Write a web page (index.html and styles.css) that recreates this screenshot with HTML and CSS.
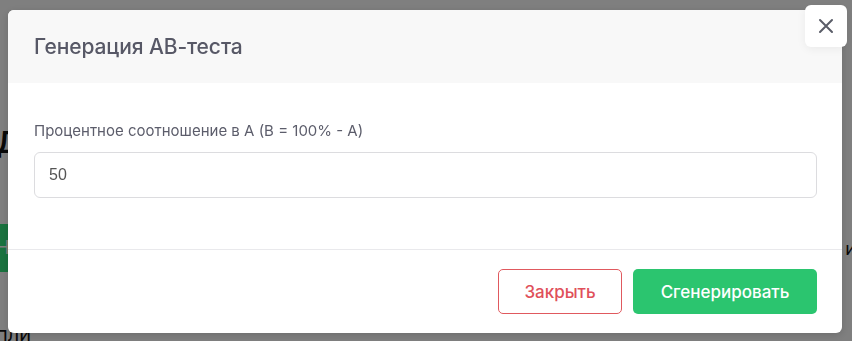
FILE: index.html
```html
<!DOCTYPE html>
<html lang="ru">
<head>
  <meta charset="UTF-8">
  <meta name="viewport" content="width=device-width, initial-scale=1.0">
  <title>Генерация АВ-теста</title>
  <link rel="stylesheet" href="styles.css">
</head>
<body>
  <!-- Страница под модалкой -->
  <div class="page">
    <div class="page-title">Д</div>
    <div class="page-btn">Не</div>
    <div class="page-foot">пли</div>
    <div class="page-side">и</div>
  </div>

  <!-- Модалка -->
  <div class="backdrop">
    <div class="modal">
      <button class="close-x" aria-label="Закрыть">
        <svg width="16" height="16" viewBox="0 0 16 16">
          <path d="M2 2 L14 14 M14 2 L2 14" stroke="#5a5d68" stroke-width="2" stroke-linecap="round" fill="none"/>
        </svg>
      </button>
      <div class="modal-header">
        <h3>Генерация АВ-теста</h3>
      </div>
      <div class="modal-body">
        <label for="percent">Процентное соотношение в А (В = 100% - А)</label>
        <input id="percent" type="text" value="50">
      </div>
      <div class="modal-footer">
        <button class="btn-close">Закрыть</button>
        <button class="btn-generate">Сгенерировать</button>
      </div>
    </div>
  </div>
</body>
</html>
```

FILE: styles.css
```css
/* Базовые стили */
body {
  margin: 0;
  padding: 0;
  font-family: Inter, "Noto Sans", sans-serif;
  background: #fff;
  height: 341px;
  overflow: hidden;
}

.page {
  position: relative;
  height: 341px;
}

.page-title {
  position: absolute;
  left: -4px;
  top: 124px;
  font-size: 30px;
  font-weight: 600;
  color: #111;
}

.page-btn {
  position: absolute;
  left: -20px;
  top: 224px;
  width: 60px;
  height: 48px;
  line-height: 48px;
  padding-left: 16px;
  background: #34e67e;
  color: #fff;
  font-size: 18px;
}

.page-foot {
  position: absolute;
  left: -4px;
  top: 322px;
  font-size: 20px;
  color: #111;
}

.page-side {
  position: absolute;
  right: -4px;
  top: 238px;
  font-size: 18px;
  color: #111;
}

.backdrop {
  position: fixed;
  inset: 0;
  background: rgba(0, 0, 0, 0.5);
}

.modal {
  position: absolute;
  left: 8px;
  top: 10px;
  width: 834px;
  background: #fff;
  border-radius: 6px;
  box-shadow: 0 2px 8px rgba(0, 0, 0, 0.15);
}

.close-x {
  position: absolute;
  right: -5px;
  top: -5px;
  width: 42px;
  height: 42px;
  border: none;
  border-radius: 6px;
  background: #fff;
  display: flex;
  align-items: center;
  justify-content: center;
  padding: 0;
  cursor: pointer;
  box-shadow: 0 2px 10px rgba(0, 0, 0, 0.06);
}

.modal-header {
  height: 73px;
  padding: 0 26px;
  display: flex;
  align-items: center;
  background: #f8f8f8;
  border-radius: 6px 6px 0 0;
}

.modal-header h3 {
  margin: 0;
  font-size: 21px;
  font-weight: 500;
  color: #575866;
  letter-spacing: -0.1px;
}

.modal-body {
  padding: 38px 25px 51px 26px;
  border-bottom: 1px solid #e9e9ec;
}

.modal-body label {
  display: block;
  font-size: 15px;
  line-height: 20px;
  color: #5c5d6b;
  margin-bottom: 11px;
}

.modal-body input {
  display: block;
  box-sizing: border-box;
  width: 100%;
  height: 46px;
  padding: 0 14px;
  border: 1px solid #dcdcdf;
  border-radius: 6px;
  font-family: "Liberation Sans", Arial, sans-serif;
  font-size: 16px;
  color: #555;
  outline: none;
}

.modal-footer {
  display: flex;
  justify-content: flex-end;
  gap: 11px;
  padding: 19px 25px 19px;
}

.modal-footer button {
  height: 45px;
  border-radius: 5px;
  font-family: Inter, "Noto Sans", sans-serif;
  font-size: 17px;
  font-weight: 500;
  cursor: pointer;
}

.btn-close {
  width: 124px;
  background: #fff;
  border: 1px solid #e0595e;
  color: #e0505a;
}

.btn-generate {
  width: 184px;
  background: #2bc56f;
  border: none;
  color: #fff;
}
```
